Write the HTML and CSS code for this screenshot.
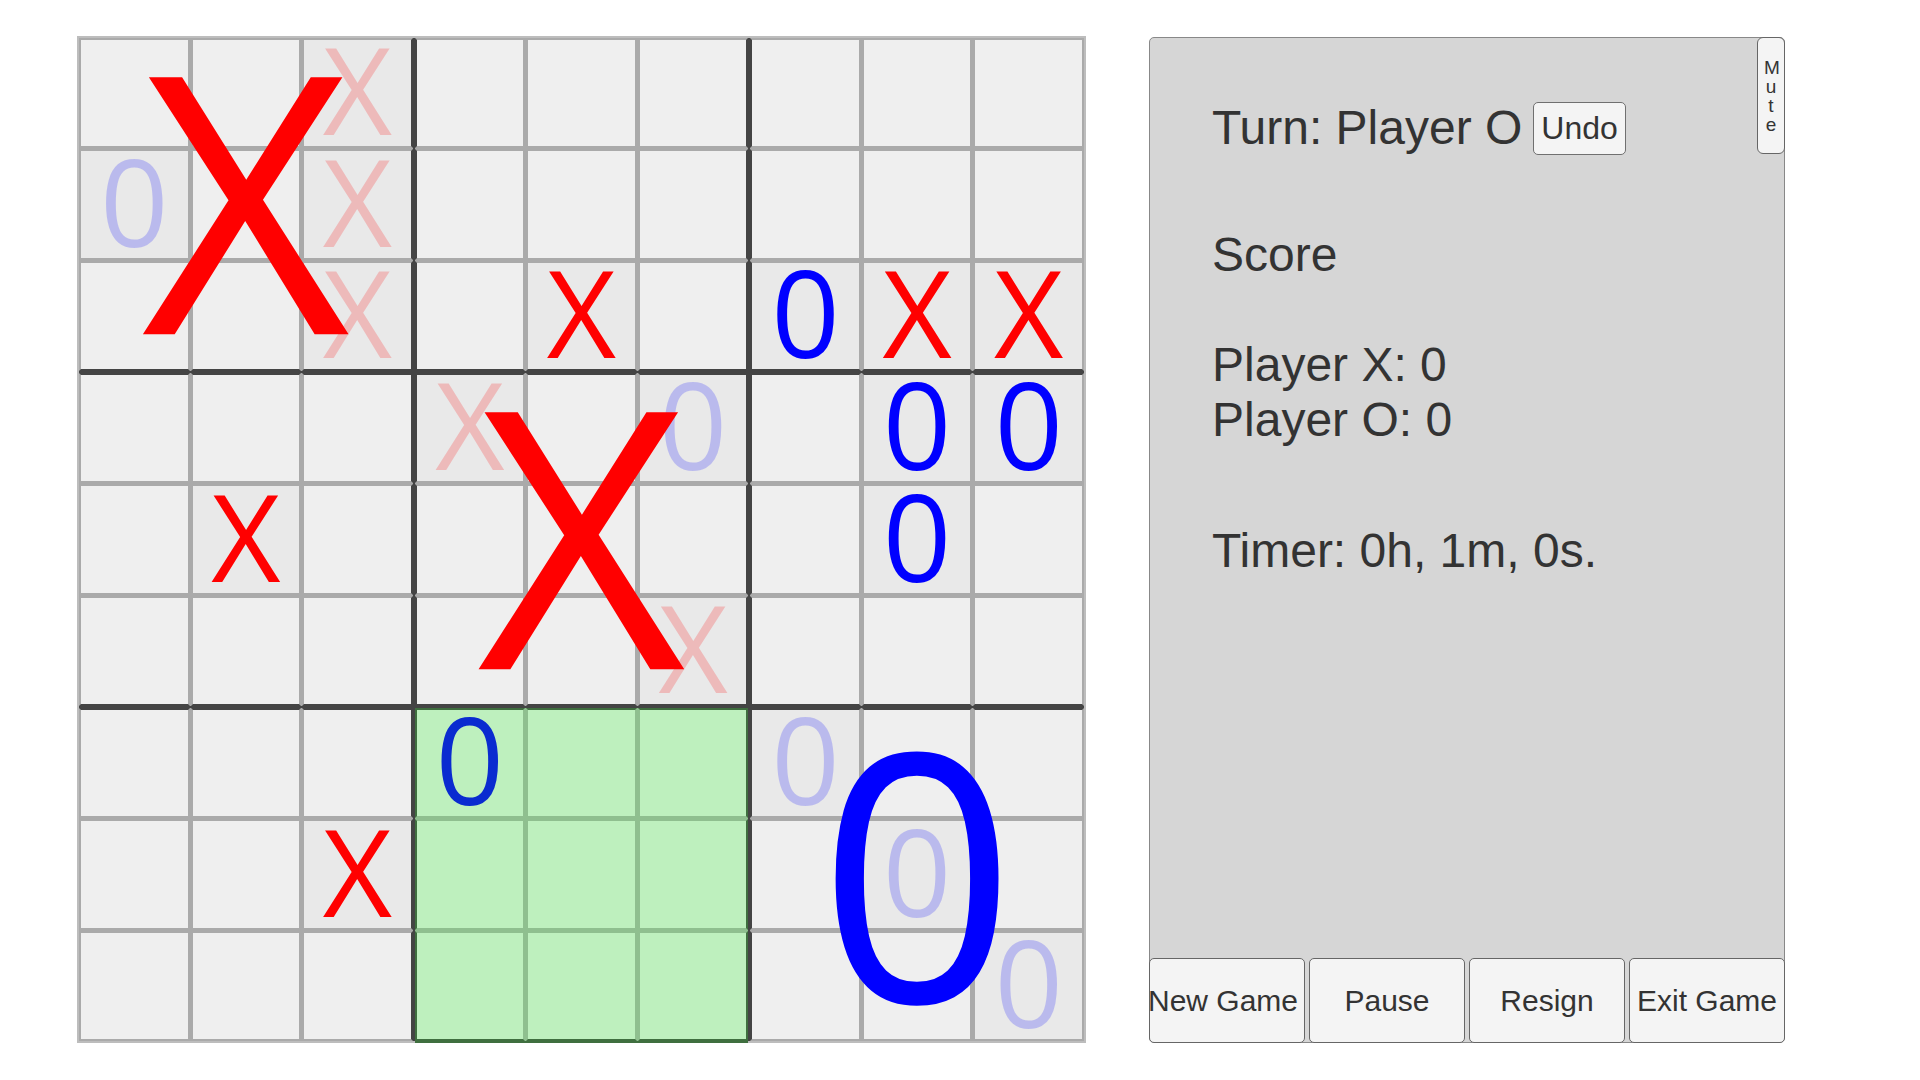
FILE: index.html
```html
<!DOCTYPE html>
<html lang="en">
<head>
<meta charset="utf-8">
<title>Ultimate Tic-Tac-Toe</title>
<link rel="stylesheet" href="styles.css">
</head>
<body>
<div class="app">
  <div class="board">
    <div class="sub">
      <div class="cell"></div><div class="cell"></div><div class="cell filled"><span class="mark x faded">X</span></div>
      <div class="cell filled"><span class="mark o faded">0</span></div><div class="cell"></div><div class="cell filled"><span class="mark x faded">X</span></div>
      <div class="cell"></div><div class="cell"></div><div class="cell filled"><span class="mark x faded">X</span></div>
      <div class="big x"><span>X</span></div>
    </div>
    <div class="sub">
      <div class="cell"></div><div class="cell"></div><div class="cell"></div>
      <div class="cell"></div><div class="cell"></div><div class="cell"></div>
      <div class="cell"></div><div class="cell filled"><span class="mark x">X</span></div><div class="cell"></div>
    </div>
    <div class="sub">
      <div class="cell"></div><div class="cell"></div><div class="cell"></div>
      <div class="cell"></div><div class="cell"></div><div class="cell"></div>
      <div class="cell filled"><span class="mark o">0</span></div><div class="cell filled"><span class="mark x">X</span></div><div class="cell filled"><span class="mark x">X</span></div>
    </div>
    <div class="sub">
      <div class="cell"></div><div class="cell"></div><div class="cell"></div>
      <div class="cell"></div><div class="cell filled"><span class="mark x">X</span></div><div class="cell"></div>
      <div class="cell"></div><div class="cell"></div><div class="cell"></div>
    </div>
    <div class="sub">
      <div class="cell filled"><span class="mark x faded">X</span></div><div class="cell"></div><div class="cell filled"><span class="mark o faded">0</span></div>
      <div class="cell"></div><div class="cell"></div><div class="cell"></div>
      <div class="cell"></div><div class="cell"></div><div class="cell filled"><span class="mark x faded">X</span></div>
      <div class="big x"><span>X</span></div>
    </div>
    <div class="sub">
      <div class="cell"></div><div class="cell filled"><span class="mark o">0</span></div><div class="cell filled"><span class="mark o">0</span></div>
      <div class="cell"></div><div class="cell filled"><span class="mark o">0</span></div><div class="cell"></div>
      <div class="cell"></div><div class="cell"></div><div class="cell"></div>
    </div>
    <div class="sub">
      <div class="cell"></div><div class="cell"></div><div class="cell"></div>
      <div class="cell"></div><div class="cell"></div><div class="cell filled"><span class="mark x">X</span></div>
      <div class="cell"></div><div class="cell"></div><div class="cell"></div>
    </div>
    <div class="sub active">
      <div class="cell filled"><span class="mark o">0</span></div><div class="cell"></div><div class="cell"></div>
      <div class="cell"></div><div class="cell"></div><div class="cell"></div>
      <div class="cell"></div><div class="cell"></div><div class="cell"></div>
    </div>
    <div class="sub">
      <div class="cell filled"><span class="mark o faded">0</span></div><div class="cell"></div><div class="cell"></div>
      <div class="cell"></div><div class="cell filled"><span class="mark o faded">0</span></div><div class="cell"></div>
      <div class="cell"></div><div class="cell"></div><div class="cell filled"><span class="mark o faded">0</span></div>
      <div class="big o"><span>0</span></div>
    </div>
  </div>

  <div class="panel">
    <button class="mute">Mute</button>
    <div class="info">
      <div class="turn"><span>Turn: Player O</span><button class="undo">Undo</button></div>
      <div class="line score">Score</div>
      <div class="line px">Player X: 0</div>
      <div class="line">Player O: 0</div>
      <div class="line timer">Timer: 0h, 1m, 0s.</div>
    </div>
    <div class="controls">
      <button class="ctrl new">New Game</button>
      <button class="ctrl">Pause</button>
      <button class="ctrl">Resign</button>
      <button class="ctrl">Exit Game</button>
    </div>
  </div>
</div>
</body>
</html>
```

FILE: styles.css
```css
* {
  box-sizing: border-box;
}

body {
  margin: 0;
  background: #ffffff;
  font-family: "Liberation Sans", Arial, sans-serif;
  color: #333333;
}

.app {
  display: flex;
  align-items: flex-start;
  padding: 36px 0 0 77px;
  gap: 63px;
}

/* ---------- Board ---------- */
.board {
  flex: none;
  width: 1009px;
  height: 1007px;
  border: 2px solid #bdbdbd;
  background: #444444;
  display: grid;
  grid-template-columns: repeat(3, minmax(0, 1fr));
  grid-template-rows: repeat(3, minmax(0, 1fr));
  gap: 2px;
}

.sub {
  position: relative;
  display: grid;
  grid-template-columns: repeat(3, minmax(0, 1fr));
  grid-template-rows: repeat(3, minmax(0, 1fr));
  gap: 1px;
  background: #aaaaaa;
  min-width: 0;
  min-height: 0;
}

.cell {
  border: 2px solid #aaaaaa;
  background: #efefef;
  display: flex;
  align-items: center;
  justify-content: center;
  font-family: "Open Sans", "Noto Sans", sans-serif;
  font-size: 120px;
  line-height: 1;
  min-width: 0;
  min-height: 0;
  overflow: visible;
}

.cell.filled {
  background: #e9e9e9;
}

/* thick lines between sub-boards */
.board > .sub:not(:nth-child(3n)) > .cell:nth-child(3n) {
  border-right-color: #444444;
}
.board > .sub:not(:nth-child(3n+1)) > .cell:nth-child(3n+1) {
  border-left-color: #444444;
}
.board > .sub:nth-child(-n+6) > .cell:nth-child(n+7) {
  border-bottom-color: #444444;
}
.board > .sub:nth-child(n+4) > .cell:nth-child(-n+3) {
  border-top-color: #444444;
}

/* active (highlighted) sub-board */
.board > .sub.active {
  background: #8fbf8f;
  box-shadow: 0 2px 0 0 #3f6f3f;
}
.board > .sub.active > .cell {
  background: #bef0be;
  border-color: #8fbf8f;
}
.board > .sub.active > .cell:nth-child(3n) {
  border-right-color: #3f6f3f;
}
.board > .sub.active > .cell:nth-child(3n+1) {
  border-left-color: #3f6f3f;
}
.board > .sub.active > .cell:nth-child(-n+3) {
  border-top-color: #3f6f3f;
}
.board > .sub.active > .cell:nth-child(n+7) {
  border-bottom-color: #3f6f3f;
}

.mark {
  transform: translateY(-0.03em);
}

.x {
  color: #ff0000;
}
.o {
  color: #0000ff;
}
.x.faded {
  color: rgba(255, 0, 0, 0.2);
}
.o.faded {
  color: rgba(0, 0, 255, 0.2);
}
.active .o {
  color: #0a2bd0;
}

.big {
  position: absolute;
  inset: 0;
  display: flex;
  align-items: center;
  justify-content: center;
  font-family: "Open Sans", "Noto Sans", sans-serif;
  font-size: 360px;
  line-height: 1;
  pointer-events: none;
}
.big span {
  transform: translateY(-0.03em);
}
.big.o {
  font-size: 346px;
}
.big.o span {
  transform: translateY(-0.019em);
}

/* ---------- Panel ---------- */
.panel {
  position: relative;
  flex: none;
  width: 636px;
  height: 1006px;
  margin-top: 1px;
  background: #d6d6d6;
  border: 1px solid #888888;
  border-radius: 5px;
  display: flex;
  flex-direction: column;
}

.info {
  flex: 1;
  padding: 62px 62px 0;
  font-size: 48px;
}

.turn {
  display: flex;
  align-items: baseline;
  gap: 11px;
}

button {
  font-family: "Liberation Sans", Arial, sans-serif;
  color: #333333;
  background: #f4f4f4;
  border: 1px solid #707070;
  border-radius: 5px;
  cursor: pointer;
}

.undo {
  align-self: flex-start;
  margin-top: 2px;
  font-size: 32px;
  padding: 7px 7px;
}

.line {
  white-space: nowrap;
}
.score {
  margin-top: 72px;
}
.px {
  margin-top: 55px;
}
.timer {
  margin-top: 76px;
}

.controls {
  display: flex;
  gap: 4px;
  height: 85px;
  margin: 0 -1px -1px;
}

.ctrl {
  flex: 1;
  min-width: 0;
  padding: 0;
  font-size: 30px;
  white-space: nowrap;
  border-color: #666666;
}
.ctrl.new {
  text-indent: -8px;
}

.mute {
  position: absolute;
  top: -1px;
  right: -1px;
  width: 28px;
  height: 117px;
  padding: 0 6px;
  font-size: 19px;
  line-height: 19px;
  word-break: break-all;
  text-align: center;
  border-color: #666666;
  border-radius: 6px;
}
```
